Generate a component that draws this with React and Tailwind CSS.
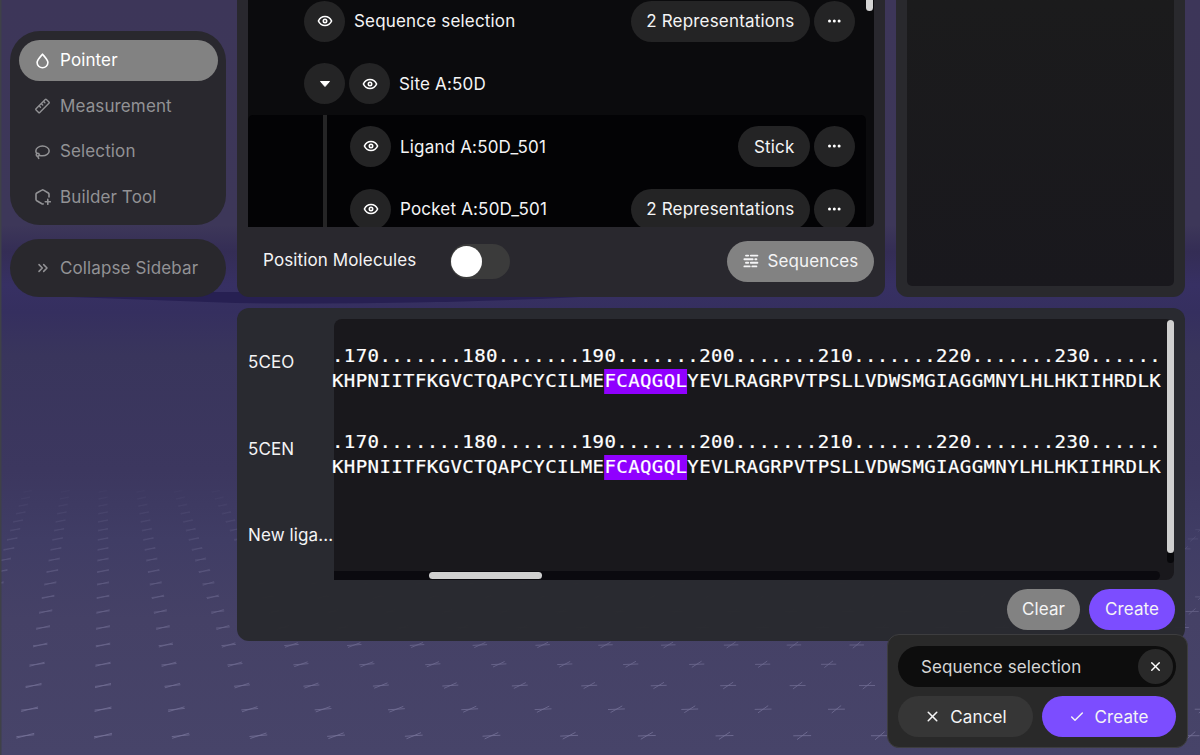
import React from 'react';
import { Check, ChevronsRight, X } from 'lucide-react';

const NUMBERS = '.170.......180.......190.......200.......210.......220.......230......';
const SEQ = ['KHPNIITFKGVCTQAPCYCILME', 'FCAQGQL', 'YEVLRAGRPVTPSLLVDWSMGIAGGMNYLHLHKIIHRDLK'];

// floor markers, in perspective
const HORIZON = 262;
const marks = [];
for (let k = -1; k < 19; k++) {
  const depth = 1 / (0.002111 + 0.000125 * k);
  const y = HORIZON + depth;
  const step = depth * 0.164;
  for (let c = -3; c < 28; c++) {
    const x = 103 + c * step;
    if (x < -20 || x > 1220) continue;
    const t = Math.min(1, Math.max(0, (x - 103) / 800));
    marks.push({
      key: `${k}_${c}`,
      x,
      y,
      flat: step * 0.115,
      tilt: step * 0.012 * (1 - t),
      dx: step * (0.115 - 0.055 * t),
      dy: step * (0.031 + 0.022 * t),
      opacity: 0.75 * Math.pow(1 - (k + 1) / 21, 1.2),
    });
  }
}

function Backdrop() {
  return (
    <svg className="absolute inset-0" width="1200" height="755" viewBox="0 0 1200 755" fill="none">
      <path d="M70 297 L200 292 L560 292 L580 297 Q420 305 236 303 Z" fill="#272052" />
      {marks.map((m) => (
        <g key={m.key} stroke="#8a86ad" strokeWidth="0.8" opacity={m.opacity}>
          <path d={`M${m.x - m.flat} ${m.y + m.tilt}L${m.x + m.flat} ${m.y - m.tilt}`} />
          <path d={`M${m.x - m.dx} ${m.y + m.dy}L${m.x + m.dx} ${m.y - m.dy}`} />
        </g>
      ))}
      <rect width="1.5" height="755" fill="#3f4148" />
    </svg>
  );
}

function EyeIcon() {
  return (
    <svg width="16" height="16" viewBox="0 0 16 16" fill="none" stroke="currentColor" strokeWidth="1.6">
      <path d="M1.4 8C2.800 5 5.200 3.500 8 3.500S13.200 5 14.600 8C13.200 11 10.800 12.500 8 12.500S2.800 11 1.400 8Z" strokeLinejoin="round" />
      <circle cx="8" cy="8" r="1.700" />
    </svg>
  );
}

function DropIcon() {
  return (
    <svg width="15" height="16" viewBox="0 0 15 16" fill="none" stroke="currentColor" strokeWidth="1.6" strokeLinejoin="round">
      <path d="M7.500 1.200C6.100 3 2.100 6.700 2.100 9.600A5.400 5.200 0 0 0 12.900 9.600C12.900 6.700 8.900 3 7.500 1.200Z" />
    </svg>
  );
}

function RulerIcon() {
  return (
    <svg width="15" height="16" viewBox="0 0 15 16" fill="none" stroke="currentColor" strokeWidth="1.400" strokeLinejoin="round" strokeLinecap="round">
      <rect x="0.200" y="5.400" width="14.600" height="5.200" rx="0.800" transform="rotate(-45 7.500 8)" />
      <path d="M4.300 8L5.500 9.200M6.500 5.800L7.700 7M8.700 3.600L9.900 4.800" />
    </svg>
  );
}

function LassoIcon() {
  return (
    <svg width="15" height="16" viewBox="0 0 16 16" fill="none" stroke="currentColor" strokeWidth="1.6" strokeLinecap="round">
      <path d="M1.800 9.400C1.200 8.600 .9 7.700 .9 6.900 .9 4 4.100 1.700 8 1.700S15.100 4 15.100 6.900 11.900 12.100 8 12.100C6.700 12.100 5.500 11.800 4.500 11.400" />
      <circle cx="2.900" cy="11" r="1.600" />
      <path d="M3.100 12.600C3.100 13.600 3.400 14.300 4 14.800" />
    </svg>
  );
}

function HexPlusIcon() {
  return (
    <svg width="16" height="16" viewBox="0 0 16 16" fill="none" stroke="currentColor" strokeWidth="1.6" strokeLinecap="round" strokeLinejoin="round">
      <path d="M14 8V5.200C14 4.700 13.800 4.300 13.300 4L8.500 1.100C8 .8 7.400 .8 6.900 1.100L1.800 4C1.300 4.300 1 4.700 1 5.200V10.600C1 11.100 1.300 11.500 1.800 11.800L6.900 14.700C7.300 14.900 7.700 15 8.100 14.900" />
      <path d="M12.800 10.300V15.300M10.300 12.800H15.300" />
    </svg>
  );
}

function SequenceIcon() {
  return (
    <svg width="16" height="16" viewBox="0 0 16 16" fill="none" stroke="currentColor" strokeWidth="1.900" strokeLinecap="round">
      <path d="M3 2.600H5.200M7.800 2.600H14.400M1.400 6.200H9.700M12.300 6.200H13.400M3 9.800H5.200M7.800 9.800H14.400M1.400 13.400H6.700M9.300 13.400H13.400" />
    </svg>
  );
}

function RoundButton({ children }) {
  return (
    <button className="flex size-[41px] shrink-0 items-center justify-center rounded-full bg-[#242425] text-white">
      {children}
    </button>
  );
}

function MoreButton() {
  return (
    <RoundButton>
      <svg width="15" height="4" viewBox="0 0 15 4" fill="currentColor">
        <circle cx="2.500" cy="2" r="1.500" />
        <circle cx="7.300" cy="2" r="1.500" />
        <circle cx="12.100" cy="2" r="1.500" />
      </svg>
    </RoundButton>
  );
}

function Row({ label, pill, caret }) {
  return (
    <div className="flex h-[62.700px] shrink-0 items-center gap-1">
      {caret && (
        <RoundButton>
          <svg width="12" height="8" viewBox="0 0 12 8" fill="currentColor" stroke="currentColor" strokeLinejoin="round">
            <path d="M1.500 1.500H10.500L6 6.500Z" />
          </svg>
        </RoundButton>
      )}
      <RoundButton><EyeIcon /></RoundButton>
      <span className="ml-[5px] grow whitespace-nowrap pt-[2px] tracking-[0.180px]">{label}</span>
      {pill && <button className="h-[41px] rounded-full bg-[#242425] px-[15.500px] pt-[2px] tracking-[0.180px]">{pill}</button>}
      {pill && <MoreButton />}
    </div>
  );
}

function ToolItem({ icon, label, active }) {
  return (
    <button className={`flex h-[41px] items-center rounded-full pl-4 ${active ? 'bg-[#828282] text-white' : 'text-[#929295]'}`}>
      <span className="flex w-[25.500px]">{icon}</span>
      <span className="pt-px">{label}</span>
    </button>
  );
}

function SequenceRow() {
  return (
    <div className="mb-[36.500px] ml-[-2.500px] w-[740px] origin-left scale-x-[1.12] whitespace-pre font-['DejaVu_Sans_Mono','Liberation_Mono',monospace] text-[17px] leading-[25px] tracking-[0.341px] text-white [-webkit-text-stroke:0.2px_white]">
      <div>{NUMBERS}</div>
      <div>
        {SEQ[0]}
        <span className="inline-block h-[25px] bg-[#9000ff]">{SEQ[1]}</span>
        {SEQ[2]}
      </div>
    </div>
  );
}

export default function App() {
  return (
    <div className="relative h-[755px] w-[1200px] overflow-hidden bg-[linear-gradient(180deg,#3d3659_0px,#3d3759_225px,#342d55_252px,#373063_285px,#352f5f_312px,#39355c_355px,#3c375f_470px,#403d65_540px,#454166_620px,#474469_755px)] font-['Inter',sans-serif] text-[17px] tracking-[0.120px] text-[#f4f4f5]">
      <Backdrop />

      <div className="relative flex h-full gap-[11px] pl-[10px]">
        <aside className="flex w-[216px] shrink-0 flex-col gap-[14px] pt-[31px]">
          <nav className="flex h-[194px] flex-col gap-[4.500px] rounded-[30px] bg-[#29282e] px-[8.500px] pt-[9px]">
            <ToolItem active icon={<DropIcon />} label="Pointer" />
            <ToolItem icon={<RulerIcon />} label="Measurement" />
            <ToolItem icon={<LassoIcon />} label="Selection" />
            <ToolItem icon={<HexPlusIcon />} label="Builder Tool" />
          </nav>
          <div className="flex h-[58px] items-center rounded-[29px] bg-[#29282d] px-[8.500px]">
            <ToolItem icon={<ChevronsRight size={16} strokeWidth={2.300} />} label="Collapse Sidebar" />
          </div>
        </aside>

        <main className="flex w-[948px] shrink-0 flex-col gap-[11px]">
          <div className="flex h-[297px] shrink-0 gap-[11px]">
            <section className="flex w-[648px] flex-col rounded-b-[12px] bg-[#29282e] px-[11px]">
              <div className="flex h-[227px] shrink-0 overflow-hidden rounded-br-[5px] bg-[#0b0b0d]">
                <div className="-mt-[10.300px] w-[618px] shrink-0">
                  <div className="pr-[11px] pl-[56px]">
                    <Row label="Sequence selection" pill="2 Representations" />
                    <Row caret label="Site A:50D" />
                  </div>
                  <div className="flex rounded-t-[5px] bg-[#030305] pr-[11px] pl-[75px]">
                    <div className="mr-[23px] w-1 shrink-0 bg-[#252526]" />
                    <div className="grow">
                      <Row label="Ligand A:50D_501" pill="Stick" />
                      <Row label="Pocket A:50D_501" pill="2 Representations" />
                    </div>
                  </div>
                </div>
                <div className="h-[11px] w-[7px] rounded-b-full bg-[#d4d4d4]" />
              </div>
              <div className="mt-[13.500px] flex h-[41px] items-center pl-[15px]">
                <span>Position Molecules</span>
                <div className="ml-[34px] flex h-[35px] w-[60px] items-center rounded-full bg-[#3b3b3b] px-px">
                  <div className="size-[31px] rounded-full bg-white" />
                </div>
                <button className="ml-auto flex h-[41px] w-[147px] items-center justify-center gap-[9px] rounded-full bg-[#828282]">
                  <SequenceIcon />
                  <span className="pt-px">Sequences</span>
                </button>
              </div>
            </section>
            <section className="w-[289px] rounded-b-[12px] bg-[#29292d] px-[11px] pb-[11px]">
              <div className="h-full rounded-b-[5px] bg-linear-to-b from-[#1b1b1c] to-[#19181d]" />
            </section>
          </div>

          <section className="flex h-[333px] flex-col rounded-[12px] bg-[#292a2f]/98 px-[11px] pt-[11px]">
            <div className="flex h-[261px] shrink-0">
              <div className="w-[86px] shrink-0 whitespace-nowrap pt-[30px]">
                <div className="h-[86.500px] leading-[26px]">5CEO</div>
                <div className="h-[86.500px] leading-[26px]">5CEN</div>
                <div className="leading-[26px]">New liga...</div>
              </div>
              <div className="flex w-[840px] flex-col rounded-[8px] bg-[#19181c]">
                <div className="flex h-[252px]">
                  <div className="w-[833px] shrink-0 pt-[24.500px]">
                    <SequenceRow />
                    <SequenceRow />
                  </div>
                  <div className="mt-px h-[243px] w-[7px] rounded-full bg-[#08080b]">
                    <div className="h-[233px] rounded-full bg-[#d0d0d0]" />
                  </div>
                </div>
                <div className="h-[9px] w-[826px] rounded-r-full rounded-bl-[8px] bg-[#0b0a0f] pt-px pl-[95px]">
                  <div className="h-[7px] w-[113px] rounded-full bg-[#d0d0d0]" />
                </div>
              </div>
            </div>
            <div className="-mr-px mt-[9px] flex justify-end gap-[9px]">
              <button className="h-[41px] w-[73px] rounded-full bg-[#828282] pt-px">Clear</button>
              <button className="h-[41px] w-[86px] rounded-full bg-[#7c4dff] pt-px">Create</button>
            </div>
          </section>
        </main>
      </div>

      {/* create selection popup */}
      <div className="absolute top-[634px] left-[887px] flex h-[114px] w-[301px] flex-col gap-[9px] rounded-[12px] border border-[#3d3d3f] bg-[#292929] px-[10px] pt-[11px]">
        <div className="flex h-[41px] w-[278px] items-center justify-between rounded-full bg-[#0d0d0d] pr-[3px] pl-[23px] text-[#d6d6d6]">
          <span className="pt-[2px]">Sequence selection</span>
          <button className="flex size-[35px] items-center justify-center rounded-full bg-[#292929] text-white">
            <X size={15} strokeWidth={2.300} />
          </button>
        </div>
        <div className="flex gap-[9px]">
          <button className="flex h-[41px] w-[135px] items-center justify-center gap-[9px] rounded-full bg-[#363636]">
            <X size={17} strokeWidth={2.200} />
            <span className="pt-[2px]">Cancel</span>
          </button>
          <button className="flex h-[41px] w-[134px] items-center justify-center gap-[9px] rounded-full bg-[#7c4dff]">
            <Check size={16} strokeWidth={2.200} />
            <span className="pt-[2px]">Create</span>
          </button>
        </div>
      </div>
    </div>
  );
}
